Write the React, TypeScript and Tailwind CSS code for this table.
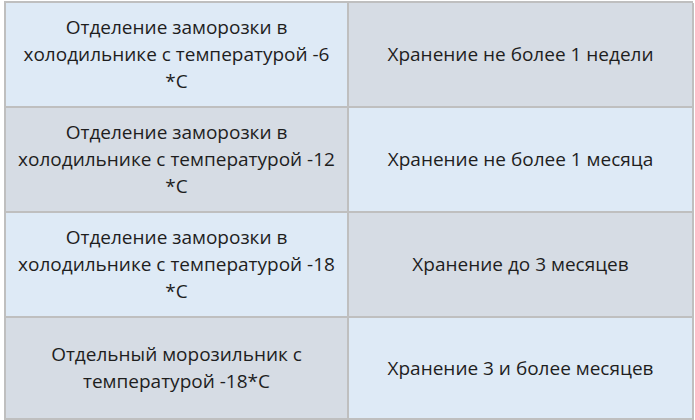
import React from "react";

const rows = [
  {
    left: ["Отделение заморозки в", "холодильнике с температурой -6", "*C"],
    right: "Хранение не более 1 недели",
  },
  {
    left: ["Отделение заморозки в", "холодильнике с температурой -12", "*C"],
    right: "Хранение не более 1 месяца",
  },
  {
    left: ["Отделение заморозки в", "холодильнике с температурой -18", "*C"],
    right: "Хранение до 3 месяцев",
  },
  {
    left: ["Отдельный морозильник с", "температурой -18*C"],
    right: "Хранение 3 и более месяцев",
  },
];

function App() {
  return (
    <div className="w-[695px] h-[420px] bg-white pl-[4px] pt-[1px]">
      <div
        className="grid grid-cols-[343px_345px] grid-rows-[105px_105px_105px_102px] w-[689px] border-l-2 border-t-2 border-[#bfbfbf] text-[#1e1e1e] text-[19px] leading-[27px]"
        style={{ fontFamily: '"Open Sans", "Liberation Sans", sans-serif' }}
      >
        {rows.map((r, i) => {
          const leftBg = i % 2 === 0 ? "bg-[#deeaf6]" : "bg-[#d6dce4]";
          const rightBg = i % 2 === 0 ? "bg-[#d6dce4]" : "bg-[#deeaf6]";
          return (
            <React.Fragment key={i}>
              <div className={`${leftBg} border-r-2 border-b-2 border-[#bfbfbf] flex flex-col items-center justify-center text-center`}>
                {r.left.map((l, j) => (
                  <span key={j} className="whitespace-nowrap">{l}</span>
                ))}
              </div>
              <div className={`${rightBg} border-r-2 border-b-2 border-[#bfbfbf] flex items-center justify-center text-center`}>
                {r.right}
              </div>
            </React.Fragment>
          );
        })}
      </div>
    </div>
  );
}

export default App;
